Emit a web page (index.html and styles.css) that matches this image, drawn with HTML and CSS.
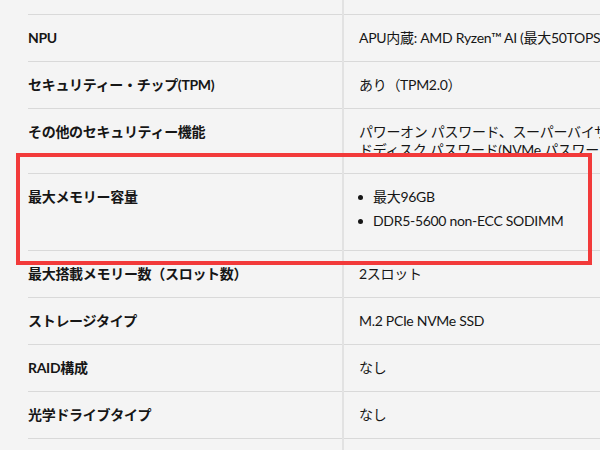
FILE: index.html
```html
<!DOCTYPE html>
<html lang="ja">
<head>
<meta charset="utf-8">
<link rel="stylesheet" href="styles.css">
</head>
<body>
<div class="page">
  <table class="spec">
    <tbody>
      <tr class="spacer"><th></th><td></td></tr>
      <tr><th>NPU</th><td>APU内蔵: AMD Ryzen™ AI (最大50TOPS)</td></tr>
      <tr><th>セキュリティー・チップ(TPM)</th><td>あり（TPM2.0）</td></tr>
      <tr><th>その他のセキュリティー機能</th><td>パワーオン パスワード、スーパーバイザー パスワード、ハー<br>ドディスク パスワード(NVMe パスワード)</td></tr>
      <tr><th>最大メモリー容量</th><td><ul class="bullets"><li>最大96GB</li><li>DDR5-5600 non-ECC SODIMM</li></ul></td></tr>
      <tr><th>最大搭載メモリー数（スロット数）</th><td>2スロット</td></tr>
      <tr><th>ストレージタイプ</th><td>M.2 PCIe NVMe SSD</td></tr>
      <tr><th>RAID構成</th><td>なし</td></tr>
      <tr><th>光学ドライブタイプ</th><td>なし</td></tr>
      <tr class="spacer tail"><th></th><td></td></tr>
    </tbody>
  </table>
  <div class="highlight"></div>
</div>
</body>
</html>
```

FILE: styles.css
```css
html, body {
  margin: 0;
  padding: 0;
  background: #f4f4f4;
  overflow: hidden;
}
.page {
  position: relative;
  width: 600px;
  height: 450px;
  overflow: hidden;
  padding-left: 28px;
  box-sizing: border-box;
  font-family: "Lato", "Noto Sans CJK JP", sans-serif;
  font-size: 14px;
  letter-spacing: -0.3px;
  color: #161616;
}
.spec {
  border-collapse: collapse;
  width: 1000px;
}
.spec th,
.spec td {
  padding: 14px 0;
  line-height: 18px;
  text-align: left;
  vertical-align: top;
  border-bottom: 1px solid #d9d9d9;
  white-space: nowrap;
}
.spec th {
  width: 314px;
  font-weight: 700;
}
.spec td {
  padding-left: 15px;
  border-left: 2px solid #e2e2e2;
  font-weight: 400;
}
.spec .spacer th,
.spec .spacer td {
  padding: 0;
  height: 14px;
}
.spec .tail th,
.spec .tail td {
  border-bottom: none;
  height: 20px;
}
.bullets {
  list-style: none;
  margin: 0;
  padding: 0;
}
.bullets li {
  position: relative;
  padding-left: 14px;
  margin-bottom: 6px;
}
.bullets li::before {
  content: "";
  position: absolute;
  left: -1px;
  top: 7px;
  width: 5px;
  height: 5px;
  border-radius: 50%;
  background: #161616;
}
.highlight {
  position: absolute;
  left: 16px;
  top: 153px;
  width: 576px;
  height: 112px;
  box-sizing: border-box;
  border: 4px solid #f23a3a;
}
```
